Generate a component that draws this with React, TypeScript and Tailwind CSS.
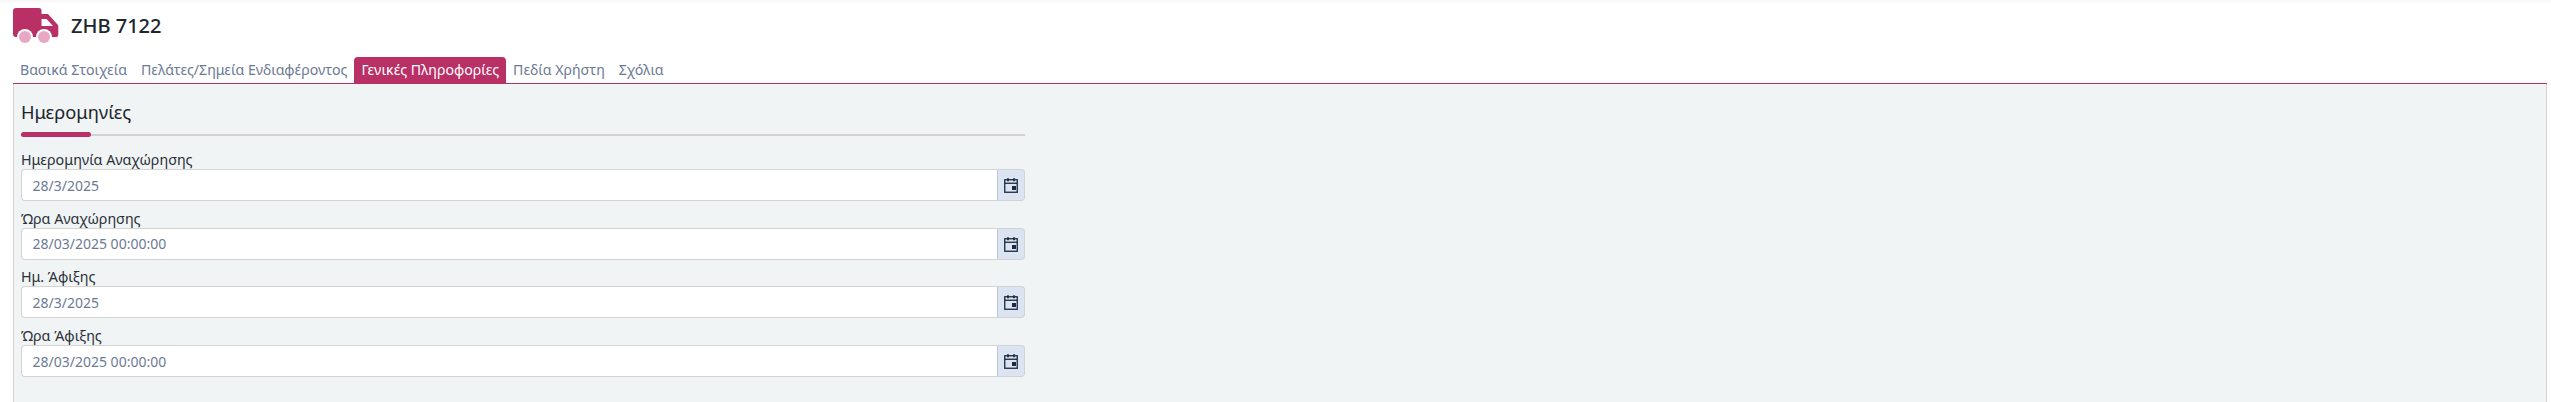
import React from "react";

const tabs = [
  { label: "Βασικά Στοιχεία" },
  { label: "Πελάτες/Σημεία Ενδιαφέροντος" },
  { label: "Γενικές Πληροφορίες", active: true },
  { label: "Πεδία Χρήστη" },
  { label: "Σχόλια" },
];

const fields = [
  { label: "Ημερομηνία Αναχώρησης", value: "28/3/2025" },
  { label: "Ώρα Αναχώρησης", value: "28/03/2025 00:00:00" },
  { label: "Ημ. Άφιξης", value: "28/3/2025" },
  { label: "Ώρα Άφιξης", value: "28/03/2025 00:00:00" },
];

const TruckIcon = () => (
  <svg width="46" height="38" viewBox="0 0 46 38" className="shrink-0">
    <path d="M3 0h23a2.5 2.5 0 0 1 2.5 2.5V6h6.5l9.5 10.5a3 3 0 0 1 .8 2V27a2 2 0 0 1-2 2H3a3 3 0 0 1-3-3V3a3 3 0 0 1 3-3Z" fill="#b83065" />
    <path d="M28.5 11h5l6.5 7h-11.5Z" fill="#ffffff" />
    <circle cx="12" cy="29" r="8" fill="#ffffff" />
    <circle cx="31" cy="29" r="8" fill="#ffffff" />
    <circle cx="12" cy="29" r="6" fill="#e6a8c4" />
    <circle cx="31" cy="29" r="6" fill="#e6a8c4" />
  </svg>
);

const CalendarIcon = () => (
  <svg width="16" height="16" viewBox="0 0 16 16" fill="none">
    <rect x="1.75" y="2.75" width="12.5" height="12.5" stroke="#1b2a41" strokeWidth="1.3" />
    <path d="M1.75 6.25h12.5" stroke="#1b2a41" strokeWidth="1.3" />
    <path d="M5 1.25v3M11 1.25v3" stroke="#1b2a41" strokeWidth="1.8" />
    <rect x="9" y="9" width="4" height="4" fill="#1b2a41" />
  </svg>
);

const DateField = ({ label, value }: { label: string; value: string }) => (
  <div>
    <label className="flex h-[26.67px] items-end text-[14.3px] leading-[18px] text-[#2b2f38]">{label}</label>
    <div className="flex h-8 w-full">
      <div className="flex min-w-0 flex-1 items-center rounded-l border border-r-0 border-[#d3d3d3] bg-white pl-[10.5px] text-[14px] text-[#6c7a94]">
        {value}
      </div>
      <div className="flex w-[28px] items-center justify-center rounded-r border border-l-0 border-[#d3d3d3] bg-[#dbe4f0] shadow-[inset_1px_0_0_#b9c8de]">
        <CalendarIcon />
      </div>
    </div>
  </div>
);

export default function App() {
  return (
    <div className="flex h-[402px] w-full flex-col overflow-hidden bg-white font-['Noto_Sans',sans-serif]">
      <div className="h-1 bg-gradient-to-b from-[#f6f6f6] to-white" />
      <div className="flex h-[53px] shrink-0 items-start gap-[12px] pl-[13px] pt-1">
        <TruckIcon />
        <h1 className="mt-[4px] text-[20px] leading-[28px] font-medium text-[#20242c]">ZHB 7122</h1>
      </div>
      <div className="ml-[13px] mr-1 flex h-[27px] shrink-0 items-end border-b border-[#b83065]">
        {tabs.map((tab) => (
          <div
            key={tab.label}
            className={`flex h-[26px] items-center rounded-t px-[7px] text-[14.15px] ${
              tab.active ? "bg-[#b83065] text-white" : "text-[#6c7a94]"
            }`}
          >
            {tab.label}
          </div>
        ))}
      </div>
      <div className="ml-[13px] mr-1 flex-1 border-x border-x-[#d3d3d3] bg-[#f0f4f5] pl-[7px]">
        <div className="w-[1004px]">
          <div className="h-[50px] pt-[15px]">
            <h2 className="text-[18.3px] leading-[25px] text-[#20242c]">Ημερομηνίες</h2>
          </div>
          <div className="relative h-[2px] bg-[#d3d3d3]">
            <div className="absolute -top-[2px] left-0 h-[5px] w-[70px] rounded-full bg-[#b83065]" />
          </div>
          <div className="pt-[6.4px]">
            {fields.map((field) => (
              <DateField key={field.label} label={field.label} value={field.value} />
            ))}
          </div>
        </div>
      </div>
    </div>
  );
}
